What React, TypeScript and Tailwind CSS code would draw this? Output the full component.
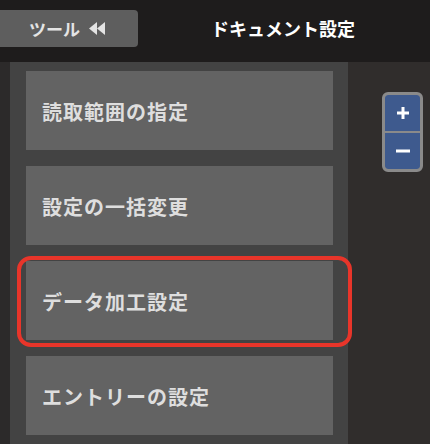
import { ReactNode } from "react";

const font = { fontFamily: '"Noto Sans CJK JP", "Noto Sans", sans-serif' };

function MenuCard({ children, selected }: { children: ReactNode; selected?: boolean }) {
    return (
        <div className="relative h-[79px] bg-[#636363] flex items-center pl-[16px]">
            <span className="text-[20px] font-bold text-[#dedede] tracking-[1px] pt-[2px]">{children}</span>
            {selected && (
                <span className="absolute -left-[9px] -right-[19px] -top-[5px] -bottom-[7px] border-[4px] border-[#e8352a] rounded-[14px]" />
            )}
        </div>
    );
}

export default function App() {
    return (
        <div className="w-[430px] h-[444px] overflow-hidden flex flex-col bg-[#1e1c1c]" style={font}>
            <div className="h-[62px] shrink-0 flex items-start pt-[10px]">
                <button className="w-[138px] h-[37px] bg-[#5e5e5e] rounded-r-[4px] flex items-center pl-[29px] gap-[9px] text-[#e4e4e4]">
                    <span className="text-[17px] font-bold">ツール</span>
                    <svg width="17" height="13" viewBox="0 0 17 13">
                        <path d="M8 0 L0 6.5 L8 13 Z" fill="#e4e4e4" />
                        <path d="M16 0 L8 6.5 L16 13 Z" fill="#e4e4e4" />
                    </svg>
                </button>
                <h1 className="ml-[73px] h-[37px] flex items-center text-[18px] font-bold text-white">ドキュメント設定</h1>
            </div>
            <div className="flex-1 flex">
                <div className="w-[10px] bg-[#2c2a2a]" />
                <div className="w-[338px] bg-[#434343] pl-[16px] pr-[15px] pt-[9px] flex flex-col gap-[16px]">
                    <MenuCard>読取範囲の指定</MenuCard>
                    <MenuCard>設定の一括変更</MenuCard>
                    <MenuCard selected>データ加工設定</MenuCard>
                    <MenuCard>エントリーの設定</MenuCard>
                </div>
                <div className="flex-1 bg-[#302d2c] pt-[30px] pl-[34px]">
                    <div className="w-[41px] h-[80px] rounded-[6px] border-[3px] border-[#8a8a8a] bg-[#8a8a8a] flex flex-col gap-[2px] overflow-hidden">
                        <div className="flex-1 bg-[#3e5a8e] rounded-t-[3px] flex items-center justify-center">
                            <svg width="14" height="14" viewBox="0 0 14 14">
                                <path d="M7 1 V13 M1 7 H13" stroke="#fff" strokeWidth="3" />
                            </svg>
                        </div>
                        <div className="flex-1 bg-[#3e5a8e] rounded-b-[3px] flex items-center justify-center">
                            <svg width="16" height="14" viewBox="0 0 16 14">
                                <path d="M1 7 H15" stroke="#fff" strokeWidth="3" />
                            </svg>
                        </div>
                    </div>
                </div>
            </div>
        </div>
    );
}
